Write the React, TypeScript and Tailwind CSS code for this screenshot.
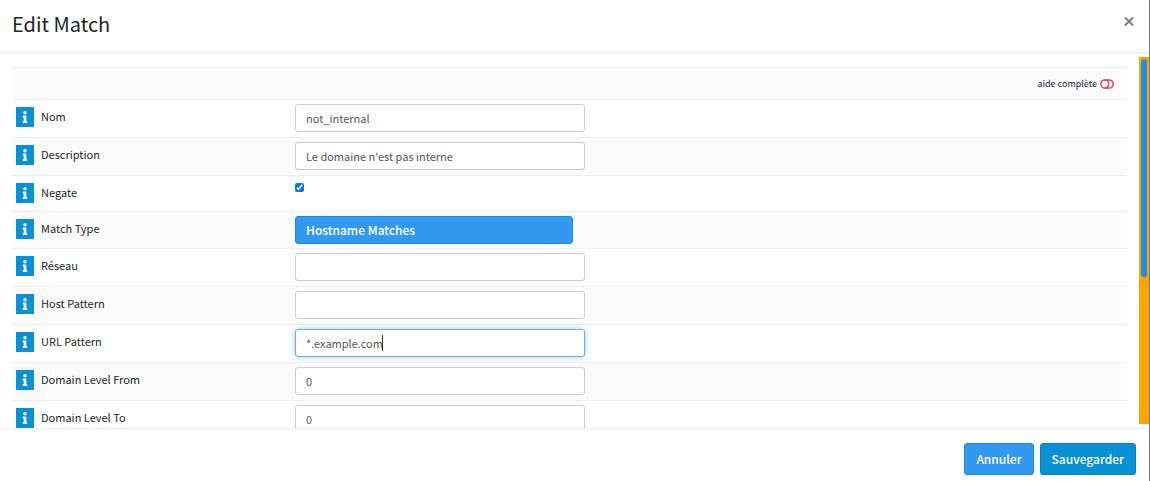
import { FaInfo } from "react-icons/fa"

const fields = [
  { id: "name", label: "Nom", type: "text", value: "not_internal" },
  { id: "description", label: "Description", type: "text", value: "Le domaine n'est pas interne" },
  { id: "negate", label: "Negate", type: "checkbox", value: "" },
  { id: "match_type", label: "Match Type", type: "select", value: "Hostname Matches" },
  { id: "network", label: "Réseau", type: "text", value: "" },
  { id: "host", label: "Host Pattern", type: "text", value: "" },
  { id: "url", label: "URL Pattern", type: "text", value: "*.example.com", focused: true },
  { id: "level_from", label: "Domain Level From", type: "text", value: "0" },
  { id: "level_to", label: "Domain Level To", type: "text", value: "0" },
]

const rowHeights: Record<string, string> = {
  text: "h-[38px]",
  checkbox: "h-9",
  select: "h-[37px]",
}

type Field = (typeof fields)[number]

function Control({ field }: { field: Field }) {
  if (field.type === "checkbox") {
    return <input id={field.id} type="checkbox" defaultChecked className="block w-[9px] h-[9px] mt-[3px] accent-[#0075ff]" />
  }
  if (field.type === "select") {
    return (
      <select
        id={field.id}
        className="block appearance-none w-[278px] h-7 px-[10px] rounded-[3px] border border-[#1a8ad4] bg-[#3399f0] text-white text-xs font-medium"
      >
        <option>{field.value}</option>
      </select>
    )
  }
  return (
    <div className="relative">
      <input
        id={field.id}
        type="text"
        defaultValue={field.value}
        autoFocus={field.focused}
        className="block w-[290px] h-7 px-[10px] rounded-[3px] border border-[#ccc] bg-white text-[#555] text-[11px] caret-transparent outline-none focus:border-[#66afe9] focus:shadow-[0_0_6px_rgba(102,175,233,0.6)]"
      />
      {field.focused && <span className="absolute left-[87px] top-[6px] w-px h-4 bg-[#333]" />}
    </div>
  )
}

function FieldRow({ field }: { field: Field }) {
  return (
    <div className={`flex shrink-0 border-t border-[#eee] even:bg-white odd:bg-[#fbfbfb] ${rowHeights[field.type]}`}>
      <div className="flex items-start w-[283px] pl-1 pt-[7px]">
        <button type="button" aria-label={`Info ${field.label}`} className="flex items-center justify-center w-[18px] h-5 bg-[#0892d3] text-white">
          <FaInfo size={12} />
        </button>
        <label htmlFor={field.id} className="pl-[7px] leading-[19px] text-[11px] text-[#212529]">
          {field.label}
        </label>
      </div>
      <div className="pt-1">
        <Control field={field} />
      </div>
    </div>
  )
}

export default function App() {
  return (
    <div className="flex flex-col h-screen bg-white border-r border-[#777] font-['Noto_Sans_CJK_JP','Open_Sans',sans-serif] text-[#212529]">
      <header className="flex items-start justify-between h-[53px] shrink-0 pl-3 pr-[14px] border-b border-[#e9ecef]">
        <h1 className="pt-[9px] text-xl leading-[30px]">Edit Match</h1>
        <button type="button" aria-label="Fermer" className="pt-[15px] text-[#777]">
          <svg width="12" height="12" viewBox="0 0 12 12" stroke="currentColor" strokeWidth="1.8">
            <path d="M1.9 2.3l8.2 8.2M10.1 2.3l-8.2 8.2" />
          </svg>
        </button>
      </header>

      <main className="flex flex-1 min-h-0">
        <form className="flex flex-col flex-1 overflow-hidden pl-3 pr-3 pt-[14px]">
          <div className="flex items-center justify-end shrink-0 h-8 pr-[13px] border-t border-[#eee] bg-[#fbfbfb]">
            <button type="button" className="flex items-center gap-[3px] text-[9px]">
              aide complète
              <svg width="14" height="10" viewBox="0 0 14 10" fill="none" stroke="#e04352" strokeWidth="1.5">
                <rect x="0.8" y="0.9" width="12.4" height="8.2" rx="4.1" />
                <path d="M4.6 0.9a4.1 4.1 0 0 1 0 8.2" />
              </svg>
            </button>
          </div>
          {fields.map((field) => (
            <FieldRow key={field.id} field={field} />
          ))}
        </form>
        <div className="w-[10px] mt-1 mb-1 p-[2px] bg-[#ffa500]">
          <div className="w-[6px] h-3/5 rounded-full bg-[#1a8fe3]" />
        </div>
      </main>

      <footer className="flex items-start justify-end gap-[6px] shrink-0 h-[53px] pt-[14px] pr-[13px] border-t border-[#eee]">
        <button type="button" className="h-8 px-[11px] rounded-[3px] border border-[#1a8ad4] bg-[#3399f0] text-white text-xs font-medium">
          Annuler
        </button>
        <button type="button" className="h-8 px-[11px] rounded-[3px] border border-[#0785c0] bg-[#0892d3] text-white text-xs font-medium">
          Sauvegarder
        </button>
      </footer>
    </div>
  )
}
